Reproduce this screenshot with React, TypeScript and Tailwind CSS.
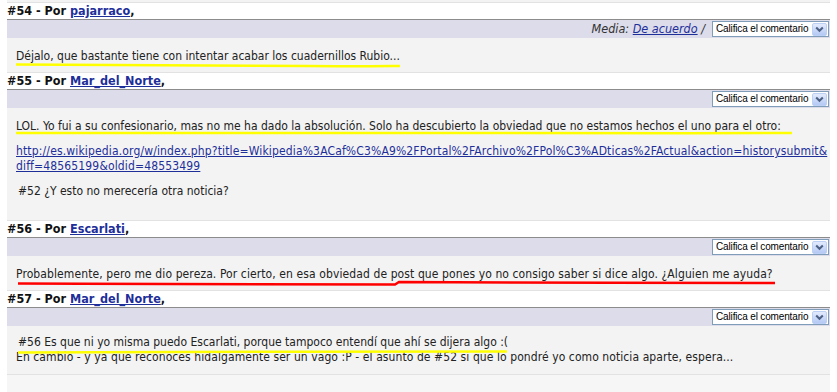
import React from "react";

const FONT = "font-['DejaVu_Sans_Condensed','DejaVu_Sans',sans-serif]";
const LINK = "text-[#1e2f9a] underline";

function Select() {
  return (
    <div className="flex h-[16px] w-[117px] items-center border border-[#7f9db9] bg-white">
      <span className="flex-1 overflow-hidden whitespace-nowrap pl-[3px] font-['Liberation_Sans',sans-serif] text-[10px] leading-none tracking-[-0.15px] text-black">
        Califica el comentario
      </span>
      <span className="mr-[1px] flex h-[13px] w-[15px] shrink-0 items-center justify-center rounded-[2px] border border-[#bccff5] bg-gradient-to-b from-[#e3ebfd] to-[#b4c9f4]">
        <svg width="9" height="7" viewBox="0 0 9 7">
          <path d="M1.2 1.5 L4.5 4.8 L7.8 1.5" stroke="#4d6185" strokeWidth="2" fill="none" />
        </svg>
      </span>
    </div>
  );
}

function Item({
  num,
  author,
  media,
  bodyClass,
  mark,
  children,
}: {
  num: number;
  author: string;
  media?: boolean;
  bodyClass: string;
  mark: React.ReactNode;
  children: React.ReactNode;
}) {
  return (
    <div>
      <div className="flex h-[17px] items-center border-b border-[#8c8c8c] bg-white text-[12.5px] font-bold leading-[16px] text-[#111]">
        <span>
          #{num} - Por <a className={LINK}>{author}</a>,
        </span>
      </div>
      <div className="flex h-[18px] items-center justify-end bg-[#dcdcea] pr-[1px]">
        {media && (
          <span className="mr-[7px] text-[12.5px] italic leading-none text-[#333]">
            Media: <a className={LINK}>De acuerdo</a> /
          </span>
        )}
        <Select />
      </div>
      <div className={`relative border-b border-[#e2e2e2] bg-[#f3f3f3] pl-[9px] text-[12px] leading-[15px] text-[#222] ${bodyClass}`}>
        {children}
        <svg className="pointer-events-none absolute inset-0 h-full w-full overflow-visible">{mark}</svg>
      </div>
    </div>
  );
}

export default function App() {
  return (
    <div className={`min-h-[392px] w-[837px] overflow-hidden bg-white ${FONT}`}>
      <div className="mx-[7px] flex flex-col">
        <div className="h-[3px] border-b border-[#e2e2e2] bg-[#f3f3f3]" />
        <Item
          num={54}
          author="pajarraco"
          media
          bodyClass="pt-[11px] pb-[8px]"
          mark={<path d="M9 26.5 C 120 27, 220 27.5, 300 28 S 380 28, 393 28" stroke="#ffff00" strokeWidth="2.5" fill="none" />}
        >
          <p>Déjalo, que bastante tiene con intentar acabar los cuadernillos Rubio...</p>
        </Item>
        <Item
          num={55}
          author="Mar_del_Norte"
          bodyClass="pt-[11px] pb-[21px]"
          mark={<path d="M9 25 C 200 25.5, 500 25.5, 785 25" stroke="#ffff00" strokeWidth="2.5" fill="none" />}
        >
          <p className="whitespace-nowrap">
            LOL. Yo fui a su confesionario, mas no me ha dado la absolución. Solo ha descubierto la obviedad que no estamos hechos el uno para el otro:
          </p>
          <p className="mt-[10px] tracking-[0.15px]">
            <a className={LINK}>
              http://es.wikipedia.org/w/index.php?title=Wikipedia%3ACaf%C3%A9%2FPortal%2FArchivo%2FPol%C3%ADticas%2FActual&amp;action=historysubmit&amp;
              <br />
              diff=48565199&amp;oldid=48553499
            </a>
          </p>
          <p className="mt-[10px] pl-[2px]">#52 ¿Y esto no merecería otra noticia?</p>
        </Item>
        <Item
          num={56}
          author="Escarlati"
          bodyClass="pt-[11px] pb-[8px]"
          mark={<path d="M11 27.5 C 150 28, 300 28.5, 388 28.5 L 392 26 C 500 26.5, 650 27, 768 27" stroke="#ff0000" strokeWidth="2.5" fill="none" />}
        >
          <p className="tracking-[0.1px]">Probablemente, pero me dio pereza. Por cierto, en esa obviedad de post que pones yo no consigo saber si dice algo. ¿Alguien me ayuda?</p>
        </Item>
        <Item
          num={57}
          author="Mar_del_Norte"
          bodyClass="pt-[9px] pb-[9px]"
          mark={<path d="M11 26.5 C 150 26, 350 25.5, 500 25.5" stroke="#ffff00" strokeWidth="2.5" fill="none" />}
        >
          <p className="pl-[2px]">#56 Es que ni yo misma puedo Escarlati, porque tampoco entendí que ahí se dijera algo :(</p>
          <p className="tracking-[0.08px]">En cambio - y ya que reconoces hidalgamente ser un vago :P - el asunto de #52 si que lo pondré yo como noticia aparte, espera...</p>
        </Item>
        <div className="h-[20px] bg-[#f6f6f6]" />
      </div>
    </div>
  );
}
